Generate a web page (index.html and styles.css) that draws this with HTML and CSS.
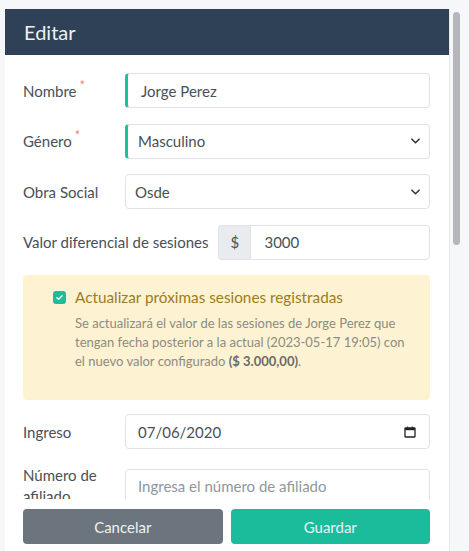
FILE: index.html
```html
<!DOCTYPE html>
<html lang="es">
<head>
<meta charset="utf-8">
<title>Editar</title>
<link rel="stylesheet" href="styles.css">
</head>
<body>
<div class="page">
  <div class="modal">
    <div class="modal-header">Editar</div>
    <div class="modal-body">
      <div class="row">
        <label class="label">Nombre<span class="req">*</span></label>
        <div class="control accent">Jorge Perez</div>
      </div>
      <div class="row">
        <label class="label">Género<span class="req">*</span></label>
        <div class="control accent select">Masculino
          <svg class="chev" viewBox="0 0 10 6" width="9" height="6"><path d="M1 1l4 4 4-4" fill="none" stroke="#343a40" stroke-width="1.8" stroke-linecap="round" stroke-linejoin="round"/></svg>
        </div>
      </div>
      <div class="row">
        <label class="label">Obra Social</label>
        <div class="control select">Osde
          <svg class="chev" viewBox="0 0 10 6" width="9" height="6"><path d="M1 1l4 4 4-4" fill="none" stroke="#343a40" stroke-width="1.8" stroke-linecap="round" stroke-linejoin="round"/></svg>
        </div>
      </div>
      <div class="row">
        <label class="label label-auto">Valor diferencial de sesiones</label>
        <div class="group">
          <span class="addon">$</span>
          <div class="control group-input">3000</div>
        </div>
      </div>
      <div class="alert">
        <div class="check-line">
          <span class="checkbox"><svg viewBox="0 0 12 12" width="9" height="9"><path d="M2.5 6.2l2.3 2.3 4.7-4.7" fill="none" stroke="#fff" stroke-width="1.8" stroke-linecap="round" stroke-linejoin="round"/></svg></span>
          <span class="check-label">Actualizar próximas sesiones registradas</span>
        </div>
        <p class="alert-text">Se actualizará el valor de las sesiones de Jorge Perez que tengan fecha posterior a la actual (2023-05-17 19:05) con el nuevo valor configurado <b>($ 3.000,00)</b>.</p>
      </div>
      <div class="row">
        <label class="label">Ingreso</label>
        <div class="control date">07/06/2020
          <svg class="cal" viewBox="0 0 12 12" width="12" height="12"><rect x="1" y="2" width="10" height="9" rx="0.5" fill="none" stroke="#222" stroke-width="1.3"/><rect x="1" y="2" width="10" height="2.2" fill="#222"/><rect x="3" y="0.6" width="1.3" height="2" fill="#222"/><rect x="7.7" y="0.6" width="1.3" height="2" fill="#222"/></svg>
        </div>
      </div>
      <div class="row row-top">
        <label class="label label-wrap">Número de afiliado</label>
        <div class="control placeholder shift">Ingresa el número de afiliado</div>
      </div>
    </div>
    <div class="modal-footer">
      <button class="btn btn-gray">Cancelar</button>
      <button class="btn btn-teal">Guardar</button>
    </div>
  </div>
  <div class="scroll-track"><div class="scroll-thumb"></div></div>
</div>
</body>
</html>
```

FILE: styles.css
```css
* { box-sizing: border-box; }
html, body { margin: 0; padding: 0; }
body {
  background: #f6f7f9;
  font-family: Lato, "Noto Sans", sans-serif;
  color: #495057;
  width: 469px;
  height: 551px;
  overflow: hidden;
}
.page {
  display: flex;
  padding: 9px 0 0 5px;
}
.modal {
  width: 446px;
  height: 560px;
  background: #fff;
  border-right: 1px solid #e6e7ea;
  display: flex;
  flex-direction: column;
}
.modal-header {
  height: 46px;
  flex: none;
  background: #2f4156;
  color: #eef1f4;
  font-size: 20px;
  display: flex;
  align-items: center;
  padding-left: 19px;
}
.modal-body {
  height: 444px;
  flex: none;
  overflow: hidden;
  padding: 18px 19px 0 18px;
}
.row {
  display: flex;
  align-items: center;
  margin-bottom: 15.5px;
}
.row-top { align-items: flex-start; }
.label {
  width: 102px;
  flex: none;
  font-size: 15px;
  color: #495057;
}
.label-auto { width: auto; margin-right: 10px; }
.label-wrap { line-height: 21px; width: 90px; margin-right: 12px; }
.req {
  color: #f07d7d;
  font-size: 13px;
  position: relative;
  top: -7px;
  margin-left: 3px;
}
.control {
  flex: 1;
  height: 35px;
  border: 1px solid #dfe2e6;
  border-radius: 4px;
  display: flex;
  align-items: center;
  padding: 0 12px;
  font-size: 15px;
  color: #495057;
  background: #fff;
}
.accent { border-left: 3px solid #1fbf9b; padding-left: 13px; }
.select { padding-left: 9px; }
.accent.select { padding-left: 10px; }
.select, .date { justify-content: space-between; }
.chev { margin-right: -3px; }
.cal { margin-right: 1px; }
.group { flex: 1; display: flex; height: 35px; }
.addon {
  width: 32px;
  flex: none;
  background: #e9ecef;
  border: 1px solid #dfe2e6;
  border-right: none;
  border-radius: 4px 0 0 4px;
  display: flex;
  align-items: center;
  justify-content: center;
  font-size: 15px;
  color: #495057;
}
.group-input { border-radius: 0 4px 4px 0; padding-left: 13px; }
.alert {
  background: #fdf3d2;
  border-radius: 4px;
  padding: 13px 22px 12px 30px;
  height: 125px;
  margin-bottom: 14px;
}
.check-line { display: flex; align-items: center; }
.checkbox {
  width: 13px;
  height: 13px;
  border-radius: 3px;
  background: #1fbc9c;
  display: flex;
  align-items: center;
  justify-content: center;
  margin-right: 9px;
  flex: none;
}
.check-label { font-size: 15.3px; color: #9e7b1e; }
.alert-text {
  margin: 8px 0 0 22px;
  font-size: 13px;
  line-height: 19px;
  color: #8d8a82;
}
.alert-text b { color: #6d6a62; }
.placeholder { color: #8f969d; }
.shift { margin-top: 4px; }
.modal-footer {
  flex: none;
  display: flex;
  gap: 8px;
  padding: 10px 19px 0 18px;
}
.btn {
  flex: 1;
  height: 35px;
  border: none;
  border-radius: 4px;
  font-family: inherit;
  font-size: 15px;
  color: #eef1f3;
}
.btn-gray { background: #6c757d; }
.btn-teal { background: #1abc9c; }
.scroll-track {
  width: 19px;
  padding: 3px 0 0 3px;
}
.scroll-thumb {
  width: 7px;
  height: 233px;
  border-radius: 4px;
  background: #b7b7bb;
}
```
